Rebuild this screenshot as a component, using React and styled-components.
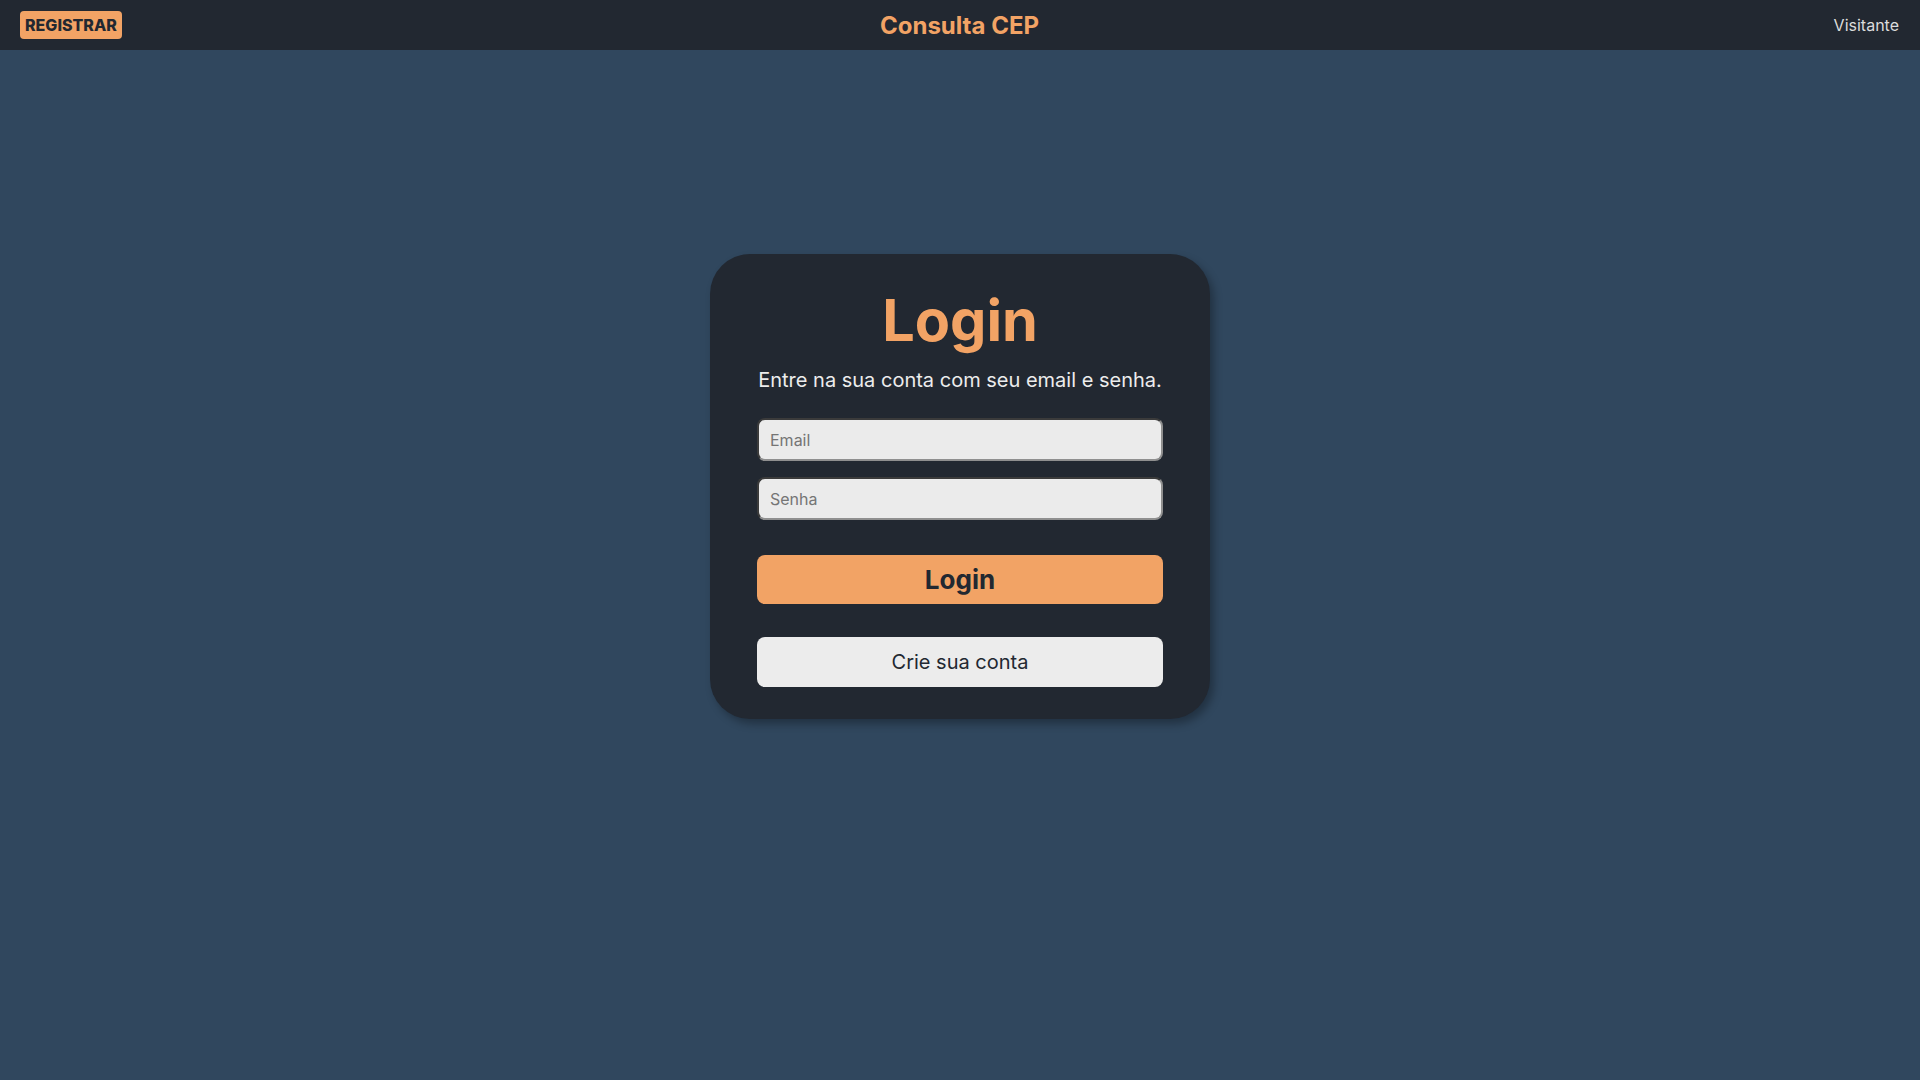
import React, { useState } from "react";
import styled, { createGlobalStyle } from "styled-components";

const GlobalStyle = createGlobalStyle`
    html, body {
        margin: 0;
        padding: 0;
        background: #30475e;
        font-family: Inter, "Noto Sans", "Liberation Sans", sans-serif;
    }
    * {
        box-sizing: border-box;
    }
`;

const Page = styled.div`
    min-height: 100vh;
    background: #30475e;
`;

const Navbar = styled.header`
    height: 50px;
    background: #222831;
    display: grid;
    grid-template-columns: 1fr auto 1fr;
    align-items: center;
    padding: 0 21px 0 20px;
`;

const RegisterButton = styled.button`
    justify-self: start;
    height: 28px;
    padding: 0 5px;
    border: none;
    border-radius: 4px;
    background: #f2a365;
    color: #222831;
    font-family: inherit;
    font-size: 16px;
    font-weight: 800;
    cursor: pointer;
`;

const Brand = styled.h2`
    margin: 0;
    color: #f2a365;
    font-size: 24px;
    font-weight: 700;
`;

const User = styled.span`
    justify-self: end;
    color: #dcdcdc;
    font-size: 16px;
`;

const Main = styled.main`
    display: flex;
    justify-content: center;
    padding-top: 204px;
`;

const Card = styled.form`
    width: 500px;
    background: #222831;
    border-radius: 40px;
    padding: 31px 47px 32px;
    box-shadow: 4px 5px 8px rgba(0, 0, 0, 0.3);
    display: flex;
    flex-direction: column;
    align-items: center;
`;

const Title = styled.h1`
    margin: 0;
    color: #f2a365;
    font-size: 57.6px;
    font-weight: 700;
`;

const Subtitle = styled.p`
    margin: 13px 0 26px;
    color: #ececec;
    font-size: 20px;
`;

const Input = styled.input`
    width: 100%;
    height: 43px;
    margin-bottom: ${props => props.gap || 0}px;
    padding: 0 11px;
    border: 2px inset #8f8f8f;
    border-radius: 8px;
    background: #ebebeb;
    font-family: inherit;
    font-size: 16px;
    color: #222831;
    outline: none;
    &::placeholder {
        color: #757575;
    }
`;

const Button = styled.button`
    width: 100%;
    height: ${props => (props.primary ? 49 : 50)}px;
    margin-top: ${props => (props.primary ? 35 : 33)}px;
    border: none;
    border-radius: 8px;
    background: ${props => (props.primary ? "#f2a365" : "#ececec")};
    color: #222831;
    font-family: inherit;
    font-size: ${props => (props.primary ? 26 : 20)}px;
    font-weight: ${props => (props.primary ? 700 : 400)};
    cursor: pointer;
`;

function App() {
    const [email, setEmail] = useState("");
    const [password, setPassword] = useState("");

    return (
        <Page>
            <GlobalStyle />
            <Navbar>
                <RegisterButton>REGISTRAR</RegisterButton>
                <Brand>Consulta CEP</Brand>
                <User>Visitante</User>
            </Navbar>
            <Main>
                <Card onSubmit={e => e.preventDefault()}>
                    <Title>Login</Title>
                    <Subtitle>Entre na sua conta com seu email e senha.</Subtitle>
                    <Input
                        type="email"
                        placeholder="Email"
                        gap={16}
                        value={email}
                        onChange={e => setEmail(e.target.value)}
                    />
                    <Input
                        type="password"
                        placeholder="Senha"
                        value={password}
                        onChange={e => setPassword(e.target.value)}
                    />
                    <Button primary type="submit">
                        Login
                    </Button>
                    <Button type="button">Crie sua conta</Button>
                </Card>
            </Main>
        </Page>
    );
}

export default App;
